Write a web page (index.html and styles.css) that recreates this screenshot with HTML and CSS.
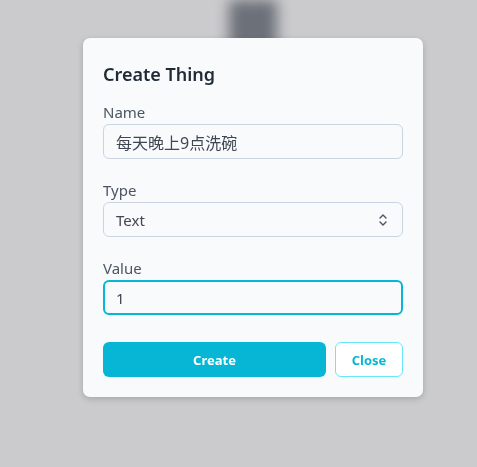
FILE: index.html
```html
<!DOCTYPE html>
<html lang="zh-CN">
<head>
    <meta charset="UTF-8">
    <meta name="viewport" content="width=device-width, initial-scale=1.0">
    <title>Create Thing</title>
    <link rel="stylesheet" href="styles.css">
</head>
<body>
    <div class="page">
        <div class="page-block"></div>
    </div>

    <div class="overlay">
        <form class="modal">
            <h2 class="modal-title">Create Thing</h2>

            <div class="field">
                <label for="name">Name</label>
                <input type="text" id="name" class="cjk" value="每天晚上9点洗碗" />
            </div>

            <div class="field">
                <label for="type">Type</label>
                <div class="select-wrap">
                    <select id="type">
                        <option>Text</option>
                        <option>Number</option>
                    </select>
                    <svg class="select-icon" width="10" height="16" viewBox="0 0 10 16">
                        <path d="M2 6 L5 3 L8 6" fill="none" stroke="#4b5563" stroke-width="1.4" stroke-linecap="round" stroke-linejoin="round"/>
                        <path d="M2 10 L5 13 L8 10" fill="none" stroke="#4b5563" stroke-width="1.4" stroke-linecap="round" stroke-linejoin="round"/>
                    </svg>
                </div>
            </div>

            <div class="field">
                <label for="value">Value</label>
                <input type="text" id="value" class="focused" value="1" />
            </div>

            <div class="actions">
                <button type="button" class="btn btn-primary">Create</button>
                <button type="button" class="btn btn-outline">Close</button>
            </div>
        </form>
    </div>
</body>
</html>
```

FILE: styles.css
```css
body {
    margin: 0;
    background: #cbcbcd;
    font-family: "Noto Sans", "Noto Sans CJK SC", sans-serif;
    color: #374151;
}
.page {
    height: 467px;
}
.page-block {
    width: 48px;
    height: 50px;
    margin-left: 229px;
    background: #6c7079;
    filter: blur(7px);
}
.overlay {
    position: fixed;
    top: 0;
    left: 0;
    right: 0;
    bottom: 0;
    padding: 38px 0 0 83px;
}
.modal {
    width: 300px;
    padding: 21px 20px 20px;
    background: #f8fafc;
    border-radius: 7px;
    box-shadow: 0 2px 6px rgba(0, 0, 0, 0.18);
}
.modal-title {
    margin: 0 0 12px;
    font-size: 18px;
    line-height: 30px;
    font-weight: 600;
    color: #1f2937;
}
.field {
    margin-bottom: 20px;
}
.field label {
    display: block;
    margin-bottom: 1px;
    font-size: 15px;
    line-height: 22px;
    color: #4b5563;
}
.field input,
.field select {
    display: block;
    box-sizing: border-box;
    width: 100%;
    height: 35px;
    padding: 0 12px;
    border: 1px solid #cbd5e1;
    border-radius: 6px;
    background: #f8fafc;
    font-family: inherit;
    font-size: 15px;
    color: #404652;
    outline: none;
}
.field input.cjk {
    font-size: 16px;
}
.field input.focused {
    border: 2px solid #06b6d4;
    padding-left: 11px;
}
.select-wrap {
    position: relative;
}
.field select {
    appearance: none;
}
.select-icon {
    position: absolute;
    right: 15px;
    top: 10px;
}
.actions {
    display: flex;
    gap: 9px;
    margin-top: 27px;
}
.btn {
    height: 35px;
    border-radius: 6px;
    font-family: inherit;
    font-size: 13px;
    font-weight: 700;
    cursor: pointer;
}
.btn-primary {
    flex: 1;
    border: none;
    background: #06b6d4;
    color: #fff;
}
.btn-outline {
    width: 68px;
    border: 1px solid #67e8f9;
    background: #fff;
    color: #06b6d4;
}
```
